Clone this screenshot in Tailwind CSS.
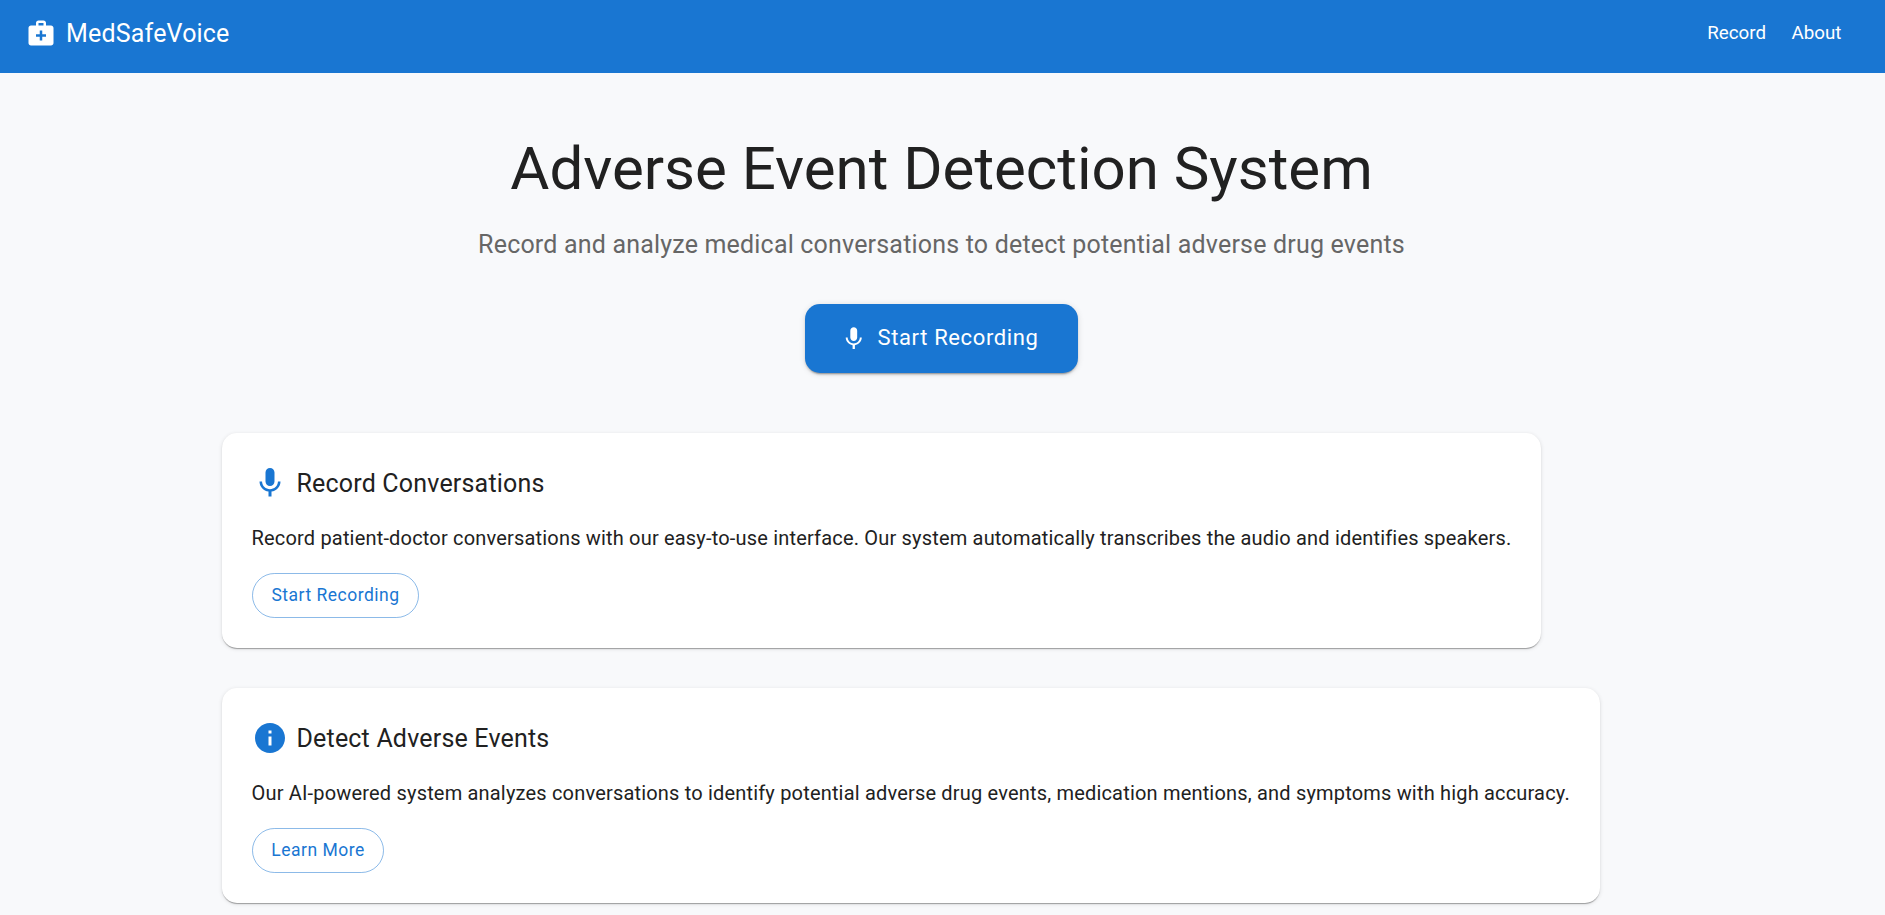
<!DOCTYPE html>
<html lang="en">
<head>
<meta charset="utf-8">
<title>MedSafeVoice</title>
<script src="https://cdn.jsdelivr.net/npm/@tailwindcss/browser@4"></script>
</head>
<body class="h-screen overflow-hidden bg-[#f8f9fb] font-[Roboto,sans-serif] text-[#212121]">
<header class="flex h-[73px] items-center justify-between bg-[#1976d2] pr-[43.5px] pb-[7px] pl-[26px] text-white">
  <div class="flex items-center gap-[10px]">
    <svg class="size-[30px]" viewBox="0 0 24 24" fill="currentColor"><path d="M20 6h-4V4c0-1.1-.9-2-2-2h-4c-1.1 0-2 .9-2 2v2H4c-1.1 0-2 .9-2 2v12c0 1.1.9 2 2 2h16c1.1 0 2-.9 2-2V8c0-1.1-.9-2-2-2zM10 4h4v2h-4V4zm6 11h-3v3h-2v-3H8v-2h3v-3h2v3h3v2z"/></svg>
    <span class="pt-[2px] text-[25px] leading-10 tracking-[0.0075em]">MedSafeVoice</span>
  </div>
  <nav class="flex gap-[25.5px] text-[18.75px] leading-[30px]">
    <a>Record</a>
    <a>About</a>
  </nav>
</header>
<main class="ml-[221.5px] w-[1440px]">
  <section class="flex flex-col items-center pt-[61px]">
    <h1 class="text-[60px] leading-[70px]">Adverse Event Detection System</h1>
    <p class="mt-[21px] text-[25px] leading-10 tracking-[0.0075em] text-[#666666]">Record and analyze medical conversations to detect potential adverse drug events</p>
    <button class="mt-[39px] flex h-[69px] w-[273px] items-center gap-[10px] rounded-[15px] bg-[#1976d2] px-[35px] text-[22px] tracking-[0.02857em] text-white shadow-[0_3px_1px_-2px_rgba(0,0,0,0.2),0_2px_2px_rgba(0,0,0,0.14),0_1px_6px_rgba(0,0,0,0.12)]">
      <svg class="size-[27.5px]" viewBox="0 0 24 24" fill="currentColor"><path d="M12 14c1.66 0 2.99-1.34 2.99-3L15 5c0-1.66-1.34-3-3-3S9 3.34 9 5v6c0 1.66 1.34 3 3 3zm5.3-3c0 3-2.54 5.1-5.3 5.1S6.7 14 6.7 11H5c0 3.41 2.72 6.23 6 6.72V21h2v-3.28c3.28-.48 6-3.3 6-6.72h-1.7z"/></svg>
      <span class="pb-[2px]">Start Recording</span>
    </button>
  </section>
  <section class="mt-[60px] flex flex-col items-start gap-[40px]">
    <article class="flex h-[215px] w-[1319px] flex-col items-start rounded-[15px] bg-white px-[30px] pt-[30px] shadow-[0_2px_1px_-1px_rgba(0,0,0,0.2),0_1px_1px_rgba(0,0,0,0.14),0_1px_4px_rgba(0,0,0,0.12)]">
      <div class="flex h-10 items-center gap-[9px]">
        <svg class="size-[36px] text-[#1976d2]" viewBox="0 0 24 24" fill="currentColor"><path d="M12 14c1.66 0 2.99-1.34 2.99-3L15 5c0-1.66-1.34-3-3-3S9 3.34 9 5v6c0 1.66 1.34 3 3 3zm5.3-3c0 3-2.54 5.1-5.3 5.1S6.7 14 6.7 11H5c0 3.41 2.72 6.23 6 6.72V21h2v-3.28c3.28-.48 6-3.3 6-6.72h-1.7z"/></svg>
        <h2 class="pt-[2px] text-[25px] leading-10 tracking-[0.0075em]">Record Conversations</h2>
      </div>
      <p class="mt-[20px] whitespace-nowrap text-[20px] leading-[30px] tracking-[0.0091em]">Record patient-doctor conversations with our easy-to-use interface. Our system automatically transcribes the audio and identifies speakers.</p>
      <button class="mt-[20px] flex h-[45px] w-[167px] items-center justify-center rounded-full border border-[#1976d2]/50 pl-px text-[17.5px] tracking-[0.02857em] text-[#1976d2]">Start Recording</button>
    </article>
    <article class="flex h-[215px] w-[1378px] flex-col items-start rounded-[15px] bg-white px-[30px] pt-[30px] shadow-[0_2px_1px_-1px_rgba(0,0,0,0.2),0_1px_1px_rgba(0,0,0,0.14),0_1px_4px_rgba(0,0,0,0.12)]">
      <div class="flex h-10 items-center gap-[9px]">
        <svg class="size-[36px] text-[#1976d2]" viewBox="0 0 24 24" fill="currentColor"><path d="M12 2C6.48 2 2 6.48 2 12s4.48 10 10 10 10-4.48 10-10S17.52 2 12 2zm1 15h-2v-6h2v6zm0-8h-2V7h2v2z"/></svg>
        <h2 class="pt-[2px] text-[25px] leading-10 tracking-[0.0075em]">Detect Adverse Events</h2>
      </div>
      <p class="mt-[20px] whitespace-nowrap text-[20px] leading-[30px] tracking-[0.0091em]">Our AI-powered system analyzes conversations to identify potential adverse drug events, medication mentions, and symptoms with high accuracy.</p>
      <button class="mt-[20px] flex h-[45px] w-[132px] items-center justify-center rounded-full border border-[#1976d2]/50 pl-px text-[17.5px] tracking-[0.02857em] text-[#1976d2]">Learn More</button>
    </article>
  </section>
</main>
</body>
</html>
